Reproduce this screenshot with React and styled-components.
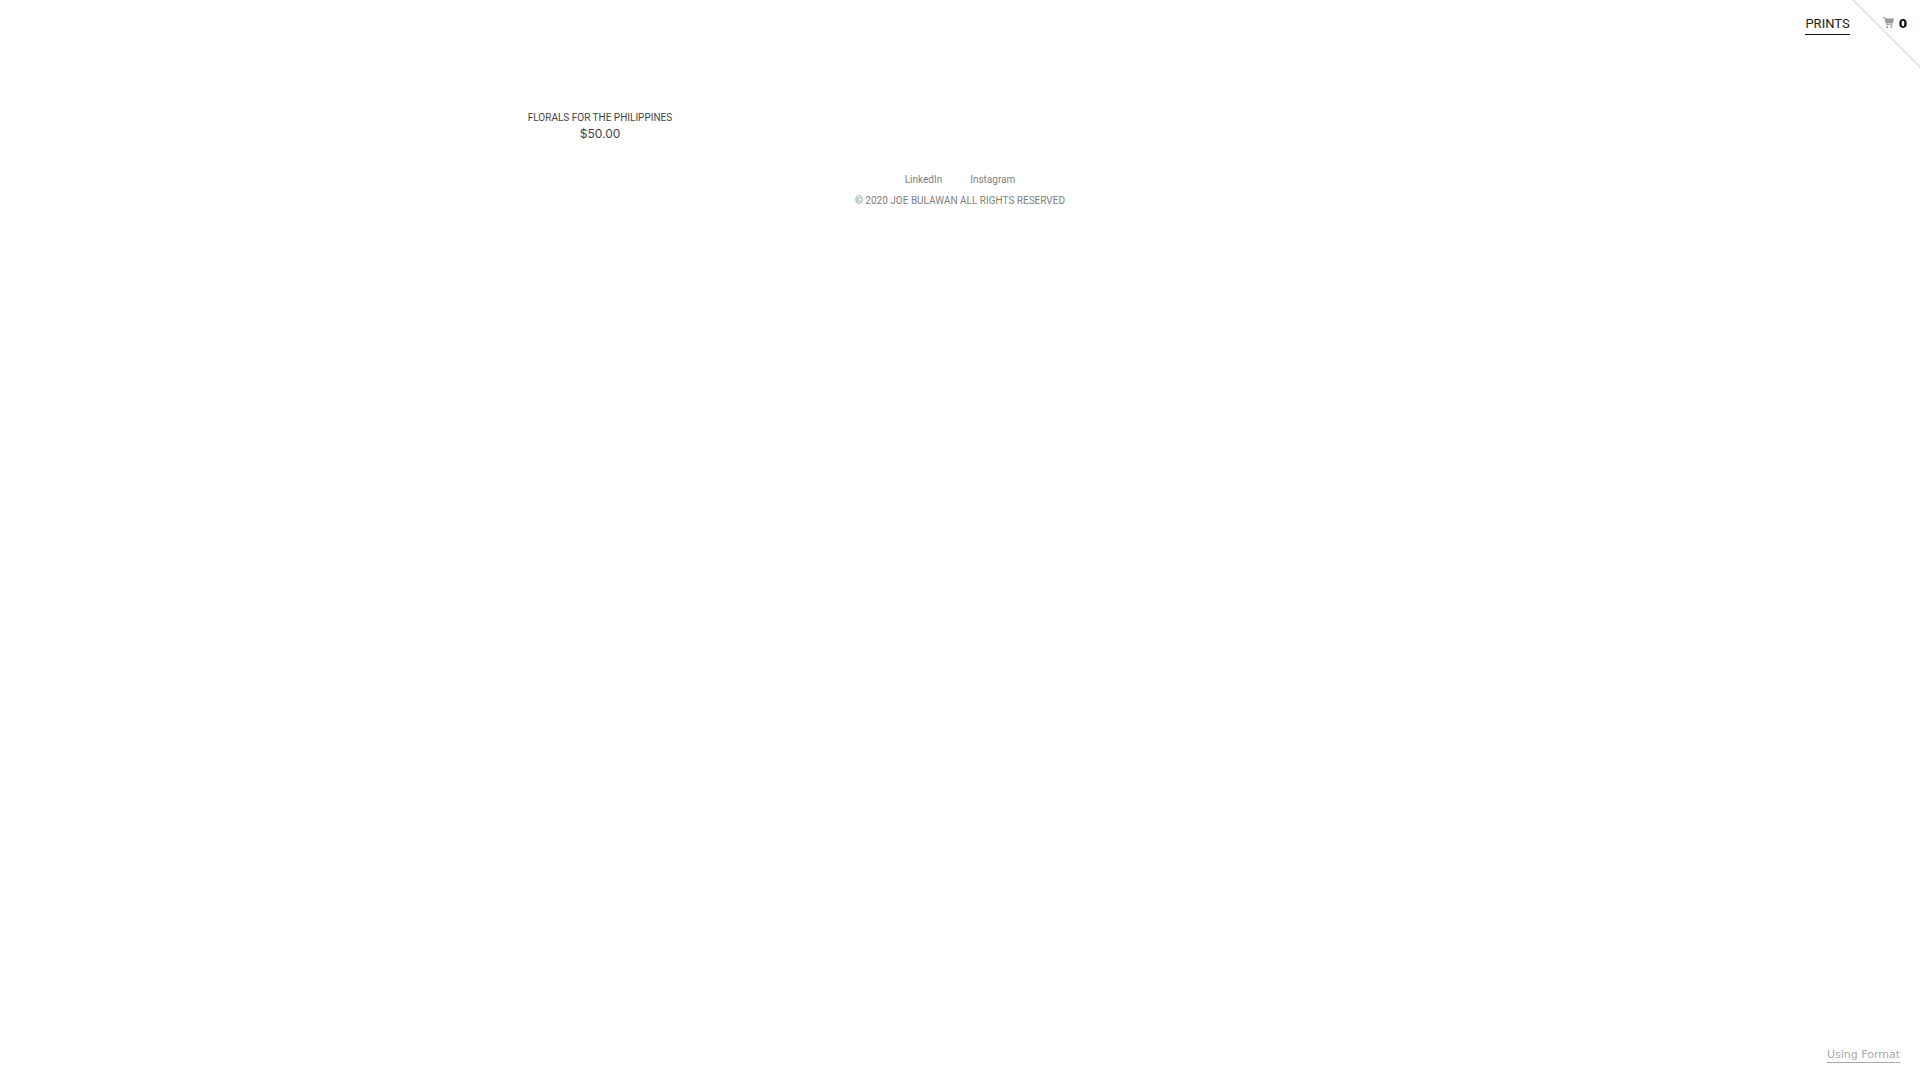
import React from 'react';
import styled, { createGlobalStyle } from 'styled-components';

const links = [
    { label: 'LinkedIn', href: '#linkedin' },
    { label: 'Instagram', href: '#instagram' },
];

const products = [
    { name: 'FLORALS FOR THE PHILIPPINES', price: '$50.00' },
];

const App = () => {
    return (
        <>
            <GlobalStyle />
            <Page>
                <Header>
                    <Nav>
                        <NavLink href='#prints'>PRINTS</NavLink>
                    </Nav>
                    <Cart href='#cart' aria-label='Cart, 0 items'>
                        <CartIcon viewBox='0 0 11 11' aria-hidden='true'>
                            <path d='M0 0h2l.5 1.4H11L9.9 6.6H3.6l.2.6h5.9v1H3.2L1.3 1H0z' />
                            <circle cx='4.2' cy='10' r='1' />
                            <circle cx='8.4' cy='10' r='1' />
                        </CartIcon>
                        <Count>0</Count>
                    </Cart>
                    <Corner viewBox='0 0 68 68' aria-hidden='true'>
                        <path d='M0 -1L69 68' />
                    </Corner>
                </Header>

                <Products>
                    {products.map((product) => (
                        <Product key={product.name} href='#product'>
                            <ProductName>{product.name}</ProductName>
                            <Price>{product.price}</Price>
                        </Product>
                    ))}
                </Products>

                <Footer>
                    <FooterLinks>
                        {links.map((link) => (
                            <a key={link.label} href={link.href}>{link.label}</a>
                        ))}
                    </FooterLinks>
                    <p>© 2020 JOE BULAWAN ALL RIGHTS RESERVED</p>
                </Footer>

                <Credit href='#format'>Using Format</Credit>
            </Page>
        </>
    )
}

export default App;


const GlobalStyle = createGlobalStyle`
* {
    box-sizing: border-box;
}

body {
    margin: 0;
    background: #fff;
    font-family: Roboto, 'Liberation Sans', sans-serif;
}

a {
    color: inherit;
    text-decoration: none;
}

h2, p {
    margin: 0;
    font-weight: 400;
}
`;

const Page = styled.div`
min-height: 100vh;
display: flex;
flex-direction: column;
`;

const Header = styled.header`
position: relative;
height: 68px;
padding: 15px 13px 0 0;
display: flex;
align-items: flex-start;
justify-content: flex-end;
gap: 33px;
`;

const Nav = styled.nav`
display: flex;
`;

const NavLink = styled.a`
padding-bottom: 1px;
border-bottom: 1px solid #111;
color: #222;
font-size: 13px;
line-height: 18px;
`;

const Cart = styled.a`
display: flex;
align-items: center;
gap: 5px;
`;

const CartIcon = styled.svg`
width: 11px;
height: 11px;
margin-bottom: 3px;
fill: #999;
`;

const Count = styled.span`
color: #000;
font-family: 'DejaVu Sans', sans-serif;
font-size: 12px;
font-weight: 700;
line-height: 18px;
`;

const Corner = styled.svg`
position: absolute;
top: 0;
right: 0;
width: 68px;
height: 68px;
stroke: #ddd;
stroke-width: 1.4;
pointer-events: none;
`;

const Products = styled.main`
width: 75%;
margin: 0 auto;
padding-top: 42px;
display: grid;
grid-template-columns: 1fr 1fr;
`;

const Product = styled.a`
color: #444;
text-align: center;
`;

const ProductName = styled.h2`
font-size: 10px;
line-height: 16px;
`;

const Price = styled.p`
font-family: Inter, 'Liberation Sans', sans-serif;
font-size: 12px;
line-height: 16px;
`;

const Footer = styled.footer`
padding-top: 30px;
display: flex;
flex-direction: column;
align-items: center;
gap: 5px;
color: #808080;
font-size: 10px;
line-height: 16px;
`;

const FooterLinks = styled.div`
display: flex;
gap: 28px;
`;

const Credit = styled.a`
margin: auto 20px 17px auto;
padding-top: 1px;
border-bottom: 1px solid #aaa;
color: #aaa;
font-family: 'DejaVu Sans', sans-serif;
font-size: 11px;
line-height: 14px;
`;
